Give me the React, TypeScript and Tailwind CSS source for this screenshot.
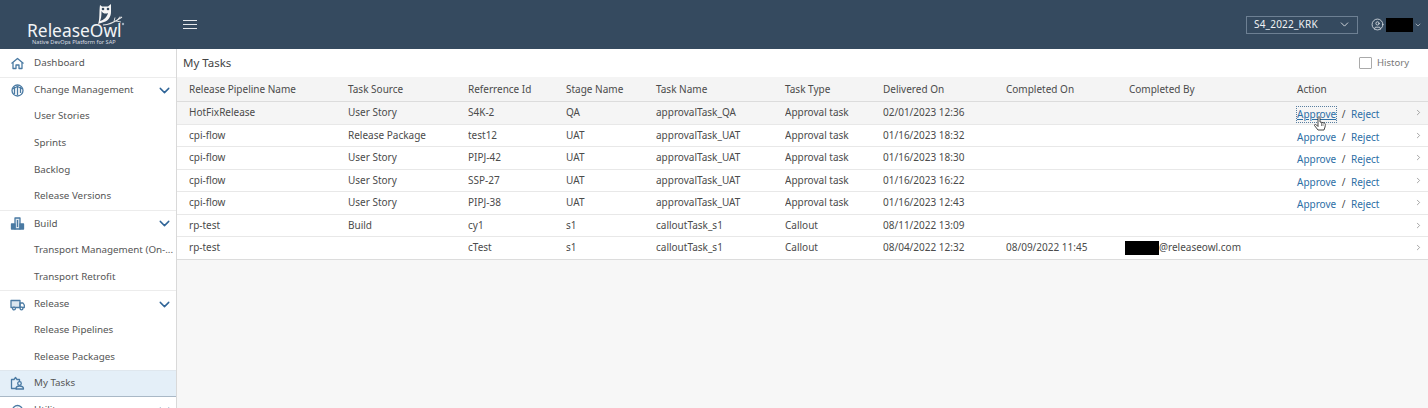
import { ChevronDown, ChevronRight, CircleUser } from 'lucide-react'

const rows = [
  ['HotFixRelease', 'User Story', 'S4K-2', 'QA', 'approvalTask_QA', 'Approval task', '02/01/2023 12:36', '', '', true],
  ['cpi-flow', 'Release Package', 'test12', 'UAT', 'approvalTask_UAT', 'Approval task', '01/16/2023 18:32', '', '', true],
  ['cpi-flow', 'User Story', 'PIPJ-42', 'UAT', 'approvalTask_UAT', 'Approval task', '01/16/2023 18:30', '', '', true],
  ['cpi-flow', 'User Story', 'SSP-27', 'UAT', 'approvalTask_UAT', 'Approval task', '01/16/2023 16:22', '', '', true],
  ['cpi-flow', 'User Story', 'PIPJ-38', 'UAT', 'approvalTask_UAT', 'Approval task', '01/16/2023 12:43', '', '', true],
  ['rp-test', 'Build', 'cy1', 's1', 'calloutTask_s1', 'Callout', '08/11/2022 13:09', '', '', false],
  ['rp-test', '', 'cTest', 's1', 'calloutTask_s1', 'Callout', '08/04/2022 12:32', '08/09/2022 11:45', '@releaseowl.com', false],
] as const

const headers = ['Release Pipeline Name', 'Task Source', 'Referrence Id', 'Stage Name', 'Task Name', 'Task Type', 'Delivered On', 'Completed On', 'Completed By', 'Action']
const cols = 'grid grid-cols-[159px_120px_98px_90px_129px_98px_123px_123px_168px_1fr] items-center pl-[12px]'

function Icon({ children }: { children: React.ReactNode }) {
  return (
    <svg width="15" height="15" viewBox="0 0 15 15" fill="none" stroke="#4a7aa3" strokeWidth="1.3" strokeLinejoin="round">
      {children}
    </svg>
  )
}

const HomeIcon = (
  <Icon>
    <path d="M1.500 7.500 L7.500 2.500 L13.500 7.500" />
    <path d="M3 6.500 V12.500 H6 V9 H9 V12.500 H12 V6.500" />
  </Icon>
)
const ChangeIcon = (
  <Icon>
    <circle cx="7.500" cy="7.500" r="5.500" />
    <path d="M4.500 4 V11 M7.500 3 V12 M10.500 4 V10" />
    <path d="M2.500 6 L7.500 3.500 L12.500 6" />
  </Icon>
)
const BuildIcon = (
  <Icon>
    <path d="M5 2 H10 V13 H5 Z" fill="#dbe6ef" />
    <path d="M1.500 8 H5 V13 H1.500 Z M10 8 H13.500 V13 H10 Z" fill="#4a7aa3" />
    <path d="M7.500 4 V11" />
  </Icon>
)
const TruckIcon = (
  <Icon>
    <path d="M1 3.500 H10 V10.500 H1 Z" fill="#dbe6ef" />
    <path d="M10 6 H13 L14.300 8 V10.500 H10 Z" />
    <circle cx="4" cy="11.500" r="1.400" fill="#fff" />
    <circle cx="11.500" cy="11.500" r="1.400" fill="#fff" />
  </Icon>
)
const TasksIcon = (
  <Icon>
    <path d="M7 12.500 H1.500 V3.500 H4 L5.500 1.500 L7 3.500 H9.500 V6" />
    <circle cx="9.500" cy="7.500" r="1.800" />
    <path d="M6 13 C6 10.500 7.500 10 9.500 10 C11.500 10 13.500 10.500 13.500 13 Z" />
  </Icon>
)
const UtilityIcon = (
  <Icon>
    <circle cx="7.500" cy="7.500" r="5" />
    <circle cx="7.500" cy="7.500" r="2" />
  </Icon>
)

function NavRow({ icon, label, open, divider }: { icon?: React.ReactNode; label: string; open?: boolean; divider?: boolean }) {
  return (
    <div className={`flex h-[26.7px] shrink-0 items-center pr-[3px] ${divider ? 'border-t border-[#ececec]' : ''}`}>
      <span className="flex w-[34px] shrink-0 justify-center">{icon}</span>
      <span className="flex-1 whitespace-nowrap">{label}</span>
      {open && <ChevronDown size={17} strokeWidth={2} className="text-[#2f6497]" />}
    </div>
  )
}

export default function App() {
  return (
    <div className="flex h-[408px] w-[1428px] flex-col overflow-hidden bg-[#f7f7f7] font-['Noto_Sans','Liberation_Sans',sans-serif] text-[10px] text-[#4b4b4b]">
      <header className="flex h-[49px] shrink-0 items-center bg-[#354a5f] text-white">
        <div className="relative flex h-[49px] w-[183px] shrink-0 flex-col pl-[27px] pt-[22px]">
          <svg width="30" height="26" viewBox="0 0 30 26" className="absolute left-[95px] top-[2px]">
            <path d="M5 3 L7 4.500 L13 4.500 L16 2 L16 10 C16 15 13 19 9 20 L3 22 C5 18 4 9 5 3 Z" fill="#f6f6f6" />
            <path d="M6.500 9 C6.500 14 6 17 5 19 C9 18 12 15 13 11 C11 12 8 12 6.500 9 Z" fill="#354a5f" />
            <circle cx="8" cy="7" r="1.300" fill="#354a5f" />
            <circle cx="13" cy="7" r="1.300" fill="#354a5f" />
            <path d="M8 23 C14 23 20 20 27 15" stroke="#e8e8e8" strokeWidth="1.100" fill="none" />
            <path d="M19 19.500 l1 -4 M23 17.500 l2 -3 M21 19 l5 1" stroke="#e8e8e8" strokeWidth="0.900" />
            <circle cx="28" cy="22" r="1.200" fill="#9fb0c0" />
          </svg>
          <span className="text-[17.400px] leading-[17px] text-[#f2f4f6]">ReleaseOwl</span>
          <span className="ml-[5px] text-[5.600px] leading-[7px] text-[#d8dde2]">Native DevOps Platform for SAP</span>
        </div>
        <div className="flex w-[14px] flex-col gap-[2.500px]">
          <span className="h-[1.500px] bg-[#e6e9ec]" />
          <span className="h-[1.500px] bg-[#e6e9ec]" />
          <span className="h-[1.500px] bg-[#e6e9ec]" />
        </div>
        <div className="flex-1" />
        <div className="flex h-[18px] w-[112px] items-center justify-between border border-[#6d8093] pl-[7px] pr-[6px] text-[10px] tracking-[0.2px] text-[#f0f2f4]">
          <span>S4_2022_KRK</span>
          <ChevronDown size={13} strokeWidth={1.5} />
        </div>
        <CircleUser size={13} strokeWidth={1.5} className="ml-[13px] text-[#dfe4e9]" />
        <div className="ml-[2px] h-[14px] w-[27px] bg-black" />
        <ChevronDown size={8} strokeWidth={1.5} className="ml-[1px] mr-[6px]" />
      </header>

      <div className="flex min-h-0 flex-1">
        <nav className="flex w-[177px] shrink-0 flex-col overflow-hidden border-r border-[#d9d9d9] bg-white pt-[1px] text-[9.800px] text-[#555]">
          <NavRow icon={HomeIcon} label="Dashboard" />
          <NavRow icon={ChangeIcon} label="Change Management" open divider />
          <NavRow label="User Stories" />
          <NavRow label="Sprints" />
          <NavRow label="Backlog" />
          <NavRow label="Release Versions" />
          <NavRow icon={BuildIcon} label="Build" open divider />
          <NavRow label="Transport Management (On-..." />
          <NavRow label="Transport Retrofit" />
          <NavRow icon={TruckIcon} label="Release" open divider />
          <NavRow label="Release Pipelines" />
          <NavRow label="Release Packages" />
          <div className="flex h-[26.7px] shrink-0 items-center border-y border-[#dfe7ee] border-b-[#a9b8c6] bg-[#e4eff8]">
            <span className="flex w-[34px] justify-center">{TasksIcon}</span>
            <span>My Tasks</span>
          </div>
          <NavRow icon={UtilityIcon} label="Utility" open />
        </nav>

        <main className="min-w-0 flex-1">
          <div className="flex h-[28px] items-center justify-between bg-white pl-[6px] pr-[19px]">
            <span className="text-[11.500px] text-[#444]">My Tasks</span>
            <label className="flex items-center gap-[5px] text-[9.500px] text-[#777]">
              <span className="h-[12px] w-[13px] rounded-[1px] border border-[#aaa] bg-white" />
              History
            </label>
          </div>
          <div className={`${cols} h-[25px] border-b border-[#dcdcdc] bg-[#f4f4f4]`}>
            {headers.map(h => <span key={h}>{h}</span>)}
          </div>
          {rows.map((r, i) => (
            <div key={i} className={`${cols} relative h-[22.5px] border-b ${i === 0 ? 'z-10 bg-[#f5f5f5]' : 'bg-white'} ${i === 6 ? 'border-[#dcdcdc]' : 'border-[#e8e8e8]'}`}>
              {r.slice(0, 8).map((c, j) => <span key={j} className="truncate">{c as string}</span>)}
              <span className="flex items-center">
                {r[8] && <span className="ml-[-4px] h-[14px] w-[34px] bg-black" />}
                {r[8]}
              </span>
              <span className="flex items-center pt-[4px]">
                {r[9] && (
                  <>
                    <a className={`text-[#2d6ea5] ${i === 0 ? 'underline outline-1 outline-dotted outline-[#5a7fa0]' : ''}`}>Approve</a>
                    <span className="mx-[5.500px]">/</span>
                    <a className="text-[#2d6ea5]">Reject</a>
                  </>
                )}
              </span>
              <ChevronRight size={9} className="absolute right-[5px] top-[6px] text-[#888]" />
              {i === 0 && (
                <svg width="14" height="15" viewBox="0 0 14 15" className="absolute left-[1136px] top-[14px]">
                  <path d="M5 1.500 C5 0.500 7 0.500 7 1.500 L7 6 L11.500 7 C12.500 7.500 12.500 9 12 11 L11 14 L5 14 L1.500 9.500 C1 8.500 2.500 8 3.500 9 L5 10.500 Z" fill="white" stroke="#333" strokeWidth="0.9" strokeLinejoin="round" />
                  <path d="M8.500 7 V10 M10 7.500 V10" stroke="#333" strokeWidth="0.6" />
                </svg>
              )}
            </div>
          ))}
        </main>
      </div>
    </div>
  )
}
